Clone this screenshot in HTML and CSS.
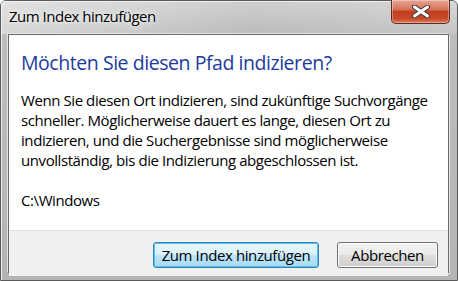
FILE: index.html
```html
<!DOCTYPE html>
<html lang="de">
<head>
  <meta charset="UTF-8">
  <title>Zum Index hinzufügen</title>
  <link rel="stylesheet" href="styles.css">
</head>
<body>
  <div class="window">
    <div class="titlebar">
      <span class="title">Zum Index hinzufügen</span>
      <button class="close" aria-label="Schließen">
        <svg width="20" height="13" viewBox="0 0 20 13">
          <path d="M3.5 2 L16.5 11 M16.5 2 L3.5 11" fill="none" stroke="#3a3a3a" stroke-width="5" stroke-linecap="round"/>
          <path d="M3.5 2 L16.5 11 M16.5 2 L3.5 11" fill="none" stroke="#ffffff" stroke-width="3" stroke-linecap="round"/>
        </svg>
      </button>
    </div>
    <div class="client">
      <div class="content">
        <h1 class="instruction">Möchten Sie diesen Pfad indizieren?</h1>
        <p class="text">Wenn Sie diesen Ort indizieren, sind zukünftige Suchvorgänge<br>schneller. Möglicherweise dauert es lange, diesen Ort zu<br>indizieren, und die Suchergebnisse sind möglicherweise<br>unvollständig, bis die Indizierung abgeschlossen ist.</p>
        <p class="text">C:\Windows</p>
      </div>
      <div class="footer">
        <button class="btn btn-default">Zum Index hinzufügen</button>
        <button class="btn">Abbrechen</button>
      </div>
    </div>
  </div>
</body>
</html>
```
FILE: styles.css
```css
body {
  margin: 0;
  font-family: "Open Sans", "Noto Sans", sans-serif;
  background: #ffffff;
}
.window {
  width: 458px;
  height: 281px;
  box-sizing: border-box;
  display: flex;
  flex-direction: column;
  padding: 0 8px 7px 7px;
  border: 1px solid #5a5a5a;
  border-radius: 6px 6px 0 0;
  background: linear-gradient(to bottom, #cfcfcf 0px, #bdbdbd 30px, #b4b4b4 100%);
  box-shadow: inset 1px 1px 0 #ececec;
}
.titlebar {
  height: 33px;
  flex: none;
  display: flex;
  align-items: flex-start;
  background: linear-gradient(to right, rgba(255,255,255,0.4), rgba(255,255,255,0) 55%, rgba(255,255,255,0.15));
  margin: 0 -8px 0 -7px;
  padding: 0 7px 0 8px;
}
.title {
  font-size: 15px;
  color: #000000;
  margin-top: 5px;
  letter-spacing: -0.5px;
  text-shadow: 0 0 8px rgba(255,255,255,0.9), 0 0 4px rgba(255,255,255,0.9);
}
.close {
  margin-left: auto;
  margin-top: -1px;
  width: 59px;
  height: 24px;
  padding: 0;
  display: flex;
  align-items: center;
  justify-content: center;
  border: 1px solid #5e2a22;
  border-top: none;
  border-radius: 0 0 5px 5px;
  background: linear-gradient(to bottom, #e8a493 0%, #d7765f 40%, #c3401f 50%, #c8482a 80%, #dd7b5c 100%);
  box-shadow: inset 0 0 0 1px rgba(255,255,255,0.35);
}
.client {
  flex: 1;
  min-height: 0;
  display: flex;
  flex-direction: column;
  border: 1px solid #6a6a6a;
  background: #ffffff;
  box-shadow: 1px 1px 0 #e4e4e4, -1px -1px 0 #e4e4e4;
}
.content {
  flex: 1;
  padding: 14px 12px 0 12px;
}
.instruction {
  margin: 0 0 14px 0;
  font-size: 19.5px;
  font-weight: normal;
  color: #1c3b9e;
  line-height: 27px;
  letter-spacing: -0.45px;
}
.text {
  margin: 0 0 20px 0;
  font-size: 15px;
  line-height: 20px;
  color: #000000;
  letter-spacing: -0.42px;
  white-space: nowrap;
}
.footer {
  flex: none;
  height: 46px;
  box-sizing: border-box;
  border-top: 1px solid #dfdfdf;
  background: #f0f0f0;
  display: flex;
  justify-content: flex-end;
  align-items: flex-start;
  gap: 18px;
  padding: 11px 10px 0 0;
}
.btn {
  font-family: inherit;
  font-size: 15px;
  letter-spacing: -0.4px;
  height: 26px;
  padding: 0;
  width: 101px;
  color: #000000;
  border: 1px solid #707070;
  border-radius: 3px;
  background: linear-gradient(to bottom, #f2f2f2 0%, #ebebeb 49%, #dddddd 50%, #cfcfcf 100%);
  box-shadow: inset 0 0 0 1px #fcfcfc;
}
.btn-default {
  width: 166px;
  border-color: #3c7fb1;
  background: linear-gradient(to bottom, #eaf6fd 0%, #d9f0fc 49%, #bee6fd 50%, #a7d9f5 100%);
  box-shadow: inset 0 0 0 1px #48c5f6;
}
```
